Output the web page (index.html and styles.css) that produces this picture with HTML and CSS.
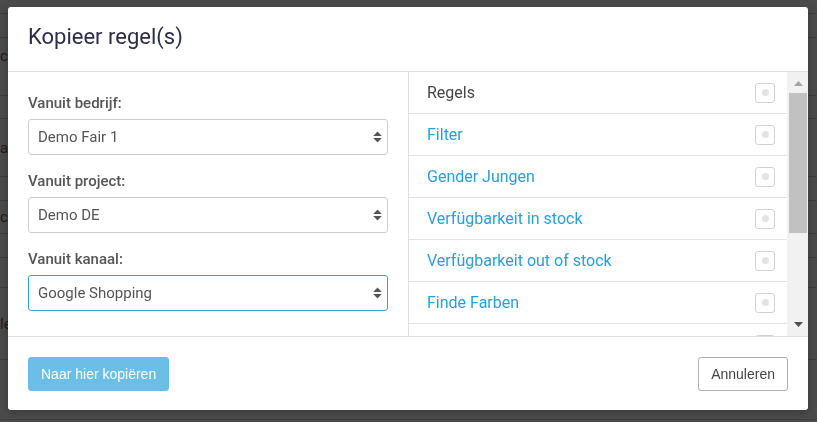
FILE: index.html
```html
<!DOCTYPE html>
<html lang="nl">
<head>
<meta charset="utf-8">
<title>Kopieer regel(s)</title>
<link rel="stylesheet" href="styles.css">
</head>
<body>
<div class="page">
  <div class="bg-row h13"></div>
  <div class="bg-row h23"></div>
  <div class="bg-row h57 up"><span class="frag">ce</span></div>
  <div class="bg-row h22"></div>
  <div class="bg-row h57"><span class="frag">ag</span></div>
  <div class="bg-row h23"></div>
  <div class="bg-row h32"><span class="frag">c</span></div>
  <div class="bg-row h23"></div>
  <div class="bg-row h29"></div>
  <div class="bg-row h71"><span class="frag">le</span></div>
  <div class="bg-row h40"></div>
</div>

<div class="modal" role="dialog">
  <div class="modal-header">
    <h4 class="modal-title">Kopieer regel(s)</h4>
  </div>
  <div class="modal-body">
    <div class="col-form">
      <div class="form-group">
        <label class="form-label">Vanuit bedrijf:</label>
        <div class="select"><span class="select-text">Demo Fair 1</span><svg class="sort-icon" width="9" height="12" viewBox="0 0 9 12"><path d="M4.5 0.5 L8.8 5 H0.2 Z M0.2 7 H8.8 L4.5 11.5 Z" fill="#555"/></svg></div>
      </div>
      <div class="form-group">
        <label class="form-label">Vanuit project:</label>
        <div class="select"><span class="select-text">Demo DE</span><svg class="sort-icon" width="9" height="12" viewBox="0 0 9 12"><path d="M4.5 0.5 L8.8 5 H0.2 Z M0.2 7 H8.8 L4.5 11.5 Z" fill="#555"/></svg></div>
      </div>
      <div class="form-group">
        <label class="form-label">Vanuit kanaal:</label>
        <div class="select focused"><span class="select-text">Google Shopping</span><svg class="sort-icon" width="9" height="12" viewBox="0 0 9 12"><path d="M4.5 0.5 L8.8 5 H0.2 Z M0.2 7 H8.8 L4.5 11.5 Z" fill="#555"/></svg></div>
      </div>
    </div>
    <div class="col-list">
      <ul class="rule-list">
        <li class="rule-row head"><span class="rule-name">Regels</span><span class="check"></span></li>
        <li class="rule-row"><span class="rule-name">Filter</span><span class="check"></span></li>
        <li class="rule-row"><span class="rule-name">Gender Jungen</span><span class="check"></span></li>
        <li class="rule-row"><span class="rule-name">Verfügbarkeit in stock</span><span class="check"></span></li>
        <li class="rule-row"><span class="rule-name">Verfügbarkeit out of stock</span><span class="check"></span></li>
        <li class="rule-row"><span class="rule-name">Finde Farben</span><span class="check"></span></li>
        <li class="rule-row"><span class="rule-name">Finde Größen</span><span class="check"></span></li>
        <li class="rule-row"><span class="rule-name">Titel optimieren</span><span class="check"></span></li>
        <li class="rule-row"><span class="rule-name">Preis anpassen</span><span class="check"></span></li>
        <li class="rule-row"><span class="rule-name">Kategorie Mapping</span><span class="check"></span></li>
      </ul>
      <div class="scrollbar" aria-hidden="true">
        <div class="sb-btn"><svg width="9" height="5" viewBox="0 0 9 5"><path d="M4.5 0 L9 5 H0 Z" fill="#a3a3a3"/></svg></div>
        <div class="sb-track"><div class="sb-thumb"></div></div>
        <div class="sb-btn down"><svg width="9" height="5" viewBox="0 0 9 5"><path d="M0 0 H9 L4.5 5 Z" fill="#505050"/></svg></div>
      </div>
    </div>
  </div>
  <div class="modal-footer">
    <button class="btn btn-primary" disabled>Naar hier kopiëren</button>
    <button class="btn btn-default">Annuleren</button>
  </div>
</div>
</body>
</html>
```

FILE: styles.css
```css
* { box-sizing: border-box; }

html, body {
  margin: 0;
  padding: 0;
  height: 100%;
}

body {
  background: #4b4b4b;
  font-family: Roboto, "Noto Sans", Arial, sans-serif;
  overflow: hidden;
}

/* dimmed page behind the dialog */
.page {
  display: flex;
  flex-direction: column;
}

.bg-row {
  border-bottom: 1px solid #3d3d3d;
  display: flex;
  align-items: center;
  font-size: 15px;
  color: #1c1c1c;
  overflow: hidden;
}

.bg-row.up { padding-bottom: 22px; }

.frag { margin-left: 0; }

.h13 { height: 14px; }
.h22 { height: 23px; }
.h23 { height: 24px; }
.h29 { height: 30px; }
.h32 { height: 33px; }
.h40 { height: 60px; }
.h57 { height: 58px; }
.h71 { height: 72px; }

/* dialog */
.modal {
  position: fixed;
  top: 7px;
  left: 8px;
  width: 800px;
  background: #fff;
  border-radius: 3px;
  box-shadow: 0 2px 8px rgba(0, 0, 0, 0.25);
  overflow: hidden;
}

.modal-header {
  padding: 15px 20px 19px;
  border-bottom: 1px solid #dedede;
}

.modal-title {
  margin: 0;
  font-size: 22px;
  line-height: 30px;
  font-weight: 400;
  color: #2c2e48;
}

.modal-body {
  display: grid;
  grid-template-columns: 401px 1fr;
  height: 265px;
  border-bottom: 1px solid #dedede;
}

.col-form {
  border-right: 1px solid #dedede;
  padding: 21px 20px 0;
}

.form-group { margin-bottom: 16px; }

.form-label {
  display: block;
  font-size: 15px;
  line-height: 20px;
  font-weight: 500;
  color: #555;
  margin-bottom: 6px;
}

.select {
  display: flex;
  align-items: center;
  justify-content: space-between;
  height: 36px;
  border: 1px solid #cdcdcd;
  border-radius: 3px;
  padding: 0 5px 0 9px;
  background: #fff;
}

.select.focused { border-color: #36a2dc; }

.select-text {
  font-size: 15px;
  color: #555;
}

.sort-icon { display: block; }

/* rules list */
.col-list {
  display: flex;
  height: 264px;
  overflow: hidden;
}

.rule-list {
  flex: 1;
  list-style: none;
  margin: 0;
  padding: 0;
  overflow: hidden;
}

.rule-row {
  display: flex;
  align-items: center;
  justify-content: space-between;
  height: 42px;
  padding: 0 12px 0 18px;
  border-bottom: 1px solid #e2e2e2;
}

.rule-name {
  font-size: 16px;
  color: #2a9fd6;
}

.rule-row.head .rule-name { color: #444; }

.check {
  width: 20px;
  height: 20px;
  border: 1px solid #d2d2d2;
  border-radius: 3px;
  display: flex;
  align-items: center;
  justify-content: center;
}

.check::after {
  content: "";
  width: 7px;
  height: 7px;
  border-radius: 50%;
  background: #e3e3e3;
}

/* scrollbar drawing */
.scrollbar {
  width: 21px;
  flex: none;
  display: flex;
  flex-direction: column;
  background: #f1f1f1;
}

.sb-btn {
  height: 21px;
  display: flex;
  justify-content: center;
  padding-top: 9px;
  padding-left: 1px;
}

.sb-btn.down { padding-top: 7px; }

.sb-btn svg { display: block; }

.sb-track {
  flex: 1;
  padding: 0 1px 0 2px;
}

.sb-thumb {
  height: 140px;
  background: #c1c1c1;
}

/* footer */
.modal-footer {
  display: flex;
  justify-content: space-between;
  align-items: center;
  padding: 20px 20px 19px;
}

.btn {
  font-family: "Liberation Sans", Arial, sans-serif;
  font-size: 14px;
  line-height: 20px;
  padding: 6px 12px;
  border-radius: 3px;
  border: 1px solid transparent;
  cursor: pointer;
}

.btn-primary {
  background: #6bbfe6;
  border-color: #6bbfe6;
  color: #fff;
}

.btn-default {
  background: #fff;
  border-color: #adadad;
  color: #444;
}
```
